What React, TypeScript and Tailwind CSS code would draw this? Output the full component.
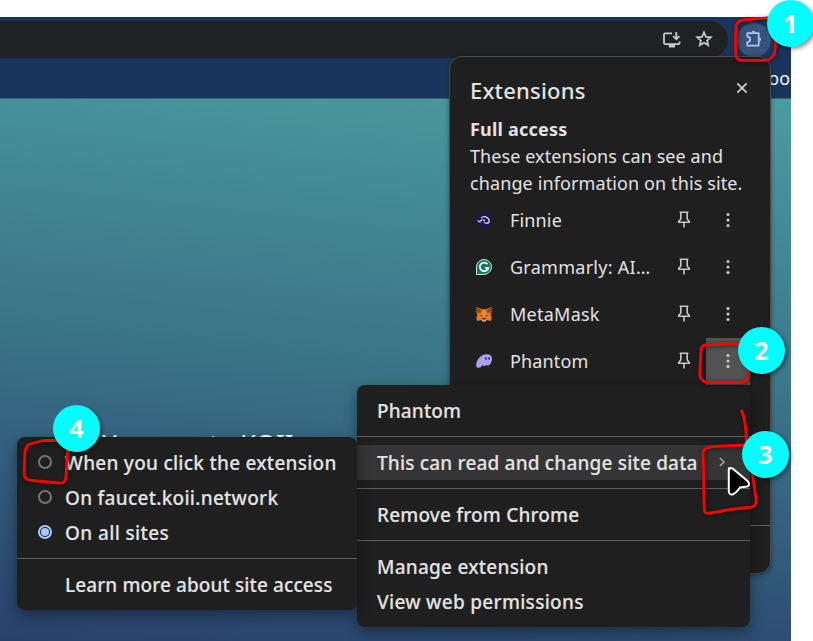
import type { ReactNode } from "react";

function InstallIcon() {
  return (
    <svg width="18" height="16" viewBox="0 0 18 16" fill="none" stroke="#c7c9cc" strokeWidth="1.8">
      <path d="M9 1.4H2.2Q1 1.4 1 2.6V11Q1 12.2 2.2 12.2H15.4Q16.6 12.2 16.6 11V9.4M13.3 0V7M10.2 4.2L13.3 7.3L16.4 4.2" />
      <path d="M5.8 14.2H12" strokeWidth="2.6" />
    </svg>
  );
}

function StarIcon() {
  return (
    <svg width="18" height="18" viewBox="0 0 18 18" fill="none" stroke="#c7c9cc" strokeWidth="1.7" className="-mt-[2px]">
      <path d="M9 2.3L10.9 6.9L15.8 7.3L12.1 10.5L13.2 15.3L9 12.8L4.8 15.3L5.9 10.5L2.2 7.3L7.1 6.9Z" />
    </svg>
  );
}

function PuzzleIcon() {
  return (
    <svg width="18" height="18" viewBox="0 0 18 18" className="-mt-[2px]">
      <path
        d="M2.3 3.2H13.7V15.6H2.3V12.2C4.2 12 5.2 10.9 5.2 9.4S4.2 6.8 2.3 6.6Z"
        fill="none"
        stroke="#a8c7fa"
        strokeWidth="1.7"
        strokeLinejoin="round"
      />
      <path d="M6.7 2.6A1.8 1.8 0 0 1 10.3 2.6ZM14.3 7.3A2.2 2.2 0 0 1 14.3 11.6Z" fill="#a8c7fa" />
    </svg>
  );
}

function PinIcon() {
  return (
    <svg width="14" height="17" viewBox="0 0 14 17" fill="none" stroke="#c7c7c7" strokeWidth="1.6">
      <path d="M2.6 1.2H11.4M3.8 1.2V8L1.7 10.5V11.3H12.3V10.5L10.2 8V1.2M7 11.2V16.5" />
    </svg>
  );
}

function DotsIcon() {
  return (
    <svg width="4" height="16" viewBox="0 0 4 16" fill="#d0d0d0">
      <circle cx="2" cy="2.4" r="1.5" />
      <circle cx="2" cy="8" r="1.5" />
      <circle cx="2" cy="13.6" r="1.5" />
    </svg>
  );
}

function FinnieIcon() {
  return (
    <svg width="16" height="16" viewBox="0 0 16 16" fill="none">
      <circle cx="8" cy="8" r="8" fill="#1d1552" />
      <path d="M5.2 6.1Q8 3.4 11 5.6T12.8 10.6Q10.5 11.8 8 10.5" stroke="#e5e2f3" strokeWidth="1.3" />
      <path d="M1.7 8.2Q2.5 10 4 9.2T6.3 7.1M4 9.4V10.8" stroke="#d5d1e8" strokeWidth="1.1" />
      <circle cx="8" cy="8.3" r="1" fill="#d5d1e8" />
    </svg>
  );
}

function GrammarlyIcon() {
  return (
    <svg width="16" height="16" viewBox="0 0 16 16" fill="none">
      <path d="M.5 8A7.5 7.5 0 1 1 8 15.5H.5Z" fill="#0f7864" stroke="#cce0dc" />
      <path d="M11.4 5.1A4.3 4.3 0 1 0 12.3 9H8.9" stroke="#fff" strokeWidth="1.8" />
      <path d="M12.2 8.2V11" stroke="#fff" strokeWidth="1.2" />
    </svg>
  );
}

function MetaMaskIcon() {
  return (
    <svg width="16" height="16" viewBox="0 0 16 16">
      <path d="M.5 1L6 3.2H10L15.5 1L15.8 6L14.7 8.6L15.8 12.5L14.5 15L11 14L9.7 15.2H6.3L5 14L1.5 15L.2 12.5L1.3 8.6L.2 6Z" fill="#e97920" />
      <path d="M.5 1L5.8 4.8L5 6.5L.9 7L.2 5.5ZM15.5 1L10.2 4.8L11 6.5L15.1 7L15.8 5.5Z" fill="#8b451f" />
      <path d="M6.2 4H9.8L9.3 10L8 12L6.7 10Z" fill="#f28b2d" />
      <path d="M3.8 8.8L6.2 9.6L5.7 10.6ZM12.2 8.8L9.8 9.6L10.3 10.6Z" fill="#43352c" />
      <path d="M6 12.4H10L10.2 14L9.5 15.4H6.5L5.8 14Z" fill="#c1aea0" />
      <path d="M6.5 12.1H9.5L9.7 13.5H6.3Z" fill="#2f2825" />
    </svg>
  );
}

function PhantomIcon() {
  return (
    <svg width="16" height="16" viewBox="0 0 16 16">
      <path d="M.1 12.5C.3 6.2 5.2 1.3 11 1.3C15 1.3 16.6 4 15.8 7.5C15.1 10.8 13 12.8 11.4 12.5C10.6 12.4 10.5 11.8 10.5 11.4C9.8 12.6 8.8 13.3 7.9 13C7.1 12.8 7 12.2 7.2 11.5C5.9 13.4 4.1 15 2.1 14.7C.8 14.5.1 13.7.1 12.5Z" fill="#ab9ff2" />
      <ellipse cx="10" cy="5.5" rx=".9" ry="1.3" fill="#25203c" />
      <ellipse cx="13.1" cy="5.5" rx=".9" ry="1.3" fill="#25203c" />
    </svg>
  );
}

interface Extension {
  name: string;
  icon: ReactNode;
  spacing: string;
  active?: boolean;
}

const extensions: Extension[] = [
  { name: "Finnie", icon: <FinnieIcon />, spacing: "tracking-[0.15px]" },
  { name: "Grammarly: AI…", icon: <GrammarlyIcon />, spacing: "tracking-[0.27px]" },
  { name: "MetaMask", icon: <MetaMaskIcon />, spacing: "tracking-[0.25px]" },
  { name: "Phantom", icon: <PhantomIcon />, spacing: "tracking-[0.14px]", active: true },
];

function ExtensionRow({ name, icon, spacing, active }: Extension) {
  return (
    <div className="flex h-[47px] items-center pl-[6px]">
      <span className="pb-[2px]">{icon}</span>
      <span className={`ml-[18px] w-[159px] whitespace-nowrap text-[18px] ${spacing}`}>{name}</span>
      <span className="flex w-[30px] justify-center pb-[2px]">
        <PinIcon />
      </span>
      <span className={`ml-[7px] flex h-full w-[44px] items-center justify-center pb-px ${active ? "bg-[#535353]" : ""}`}>
        <DotsIcon />
      </span>
    </div>
  );
}

function Separator() {
  return <div className="my-2 h-px bg-[#606060]" />;
}

function MenuItem({ children, spacing }: { children: ReactNode; spacing: string }) {
  return <div className={`flex h-[35px] items-center whitespace-nowrap pl-5 pt-[2px] ${spacing}`}>{children}</div>;
}

function Radio({ checked = false }: { checked?: boolean }) {
  return (
    <span className={`-mt-[3px] ml-[1px] mr-[13px] flex size-[14px] items-center justify-center rounded-full border-2 ${checked ? "border-[#a8c7fa]" : "border-[#757575]"}`}>
      {checked && <span className="size-2 rounded-full bg-[#a8c7fa]" />}
    </span>
  );
}

function Badge({ children, position }: { children: string; position: string }) {
  return (
    <div className={`absolute flex size-[47px] items-center justify-center rounded-full bg-[#00ffff] font-['Open_Sans',sans-serif] text-[25px] font-bold text-white shadow-[2px_2px_4px_rgba(0,0,0,0.45)] ${position}`}>
      {children}
    </div>
  );
}

export default function App() {
  return (
    <div className="relative h-[641px] w-[813px] overflow-hidden bg-white pt-[17px] font-['Noto_Sans',sans-serif] text-[#e3e3e3]">
      <div className="flex h-[624px] w-[791px] flex-col bg-[#1a355b]">
        <div className="flex h-[41px] items-center pt-1">
          <div className="flex h-[37px] w-[728px] items-center justify-end gap-[14px] rounded-r-full bg-[#202124] pr-[15px]">
            <InstallIcon />
            <StarIcon />
          </div>
          <div className="ml-[9px] flex size-[34px] items-center justify-center rounded-full bg-[#38527b]">
            <PuzzleIcon />
          </div>
        </div>
        <div className="flex h-[41px] items-center justify-end border-b border-[#435b7d] pr-px pt-px font-['Open_Sans',sans-serif] text-[18px] font-medium text-white">
          oo
        </div>
        <div className="flex-1 bg-[linear-gradient(186deg,#4a9c9f_0%,#3a7388_50%,#29406b_100%)] pl-[102px] pt-[326px] text-white">
          <div className="flex text-[26px] leading-[36px]">
            <span className="w-[107px]">Y</span>
            <span className="w-[31px]">t</span>
            <span>KOII</span>
          </div>
        </div>
      </div>

      <div className="absolute left-[449px] top-[56px] flex h-[518px] w-[322px] flex-col rounded-[13px] border border-[#4b4b4b] bg-[#1f1f1f] pl-5 text-[18px] leading-[27px] shadow-[0_2px_5px_rgba(0,0,0,0.4)]">
        <div className="flex h-[59px] items-center justify-between pr-[22px] pt-[7px]">
          <h1 className="text-[22px] font-medium tracking-[0.2px]">Extensions</h1>
          <svg width="12" height="12" viewBox="0 0 12 12" className="-mt-1" stroke="#d0d0d0" strokeWidth="1.7">
            <path d="M1.3 1.3L10.7 10.7M10.7 1.3L1.3 10.7" />
          </svg>
        </div>
        <h2 className="font-bold tracking-[0.2px]">Full access</h2>
        <p className="whitespace-nowrap tracking-[0.08px]">These extensions can see and</p>
        <p className="whitespace-nowrap tracking-[0.11px]">change information on this site.</p>
        {extensions.map((extension) => (
          <ExtensionRow key={extension.name} {...extension} />
        ))}
        <div className="-ml-5 mt-[140px] h-px bg-[#606060]" />
      </div>

      <div className="absolute left-[357px] top-[385px] w-[393px] rounded-lg bg-[#1f1f1f] py-2 text-[19px] font-medium shadow-[0_5px_14px_rgba(0,0,0,0.4)] [-webkit-text-stroke:0.15px_#e3e3e3]">
        <MenuItem spacing="tracking-[0.15px]">Phantom</MenuItem>
        <Separator />
        <div className="flex h-[35px] items-center justify-between bg-[#353535] pl-5 pr-[25px]">
          <span className="whitespace-nowrap pt-[2px] tracking-[0.18px]">This can read and change site data</span>
          <svg width="6" height="10" viewBox="0 0 6 10" fill="none" stroke="#aaa" strokeWidth="1.5" className="-mt-px">
            <path d="M1 1L5 5L1 9" />
          </svg>
        </div>
        <Separator />
        <MenuItem spacing="tracking-[0.18px]">Remove from Chrome</MenuItem>
        <Separator />
        <MenuItem spacing="tracking-[0.25px]">Manage extension</MenuItem>
        <MenuItem spacing="tracking-[0.3px]">View web permissions</MenuItem>
      </div>

      <div className="absolute left-[17px] top-[437px] w-[340px] rounded-lg bg-[#1f1f1f] py-2 text-[19px] font-medium shadow-[0_5px_14px_rgba(0,0,0,0.4)] [-webkit-text-stroke:0.15px_#e3e3e3]">
        <MenuItem spacing="tracking-[0.26px]"><Radio />When you click the extension</MenuItem>
        <MenuItem spacing="tracking-[0.27px]"><Radio />On faucet.koii.network</MenuItem>
        <MenuItem spacing="tracking-[0.38px]"><Radio checked />On all sites</MenuItem>
        <Separator />
        <MenuItem spacing="tracking-[0.1px]"><span className="w-7" />Learn more about site access</MenuItem>
      </div>

      <svg className="absolute left-0 top-0" width="813" height="641" viewBox="0 0 813 641" fill="none">
        <g stroke="#fd0000" strokeWidth="2.8" strokeLinecap="round" strokeLinejoin="round" className="drop-shadow-[1px_1px_2px_rgba(0,0,0,0.5)]">
          <path d="M770 17.7L744 20Q738 20 736.5 25Q735 35 735.7 53Q736 60 741 60.3H763Q769 61 773 56Q776 53 775.3 37" />
          <path d="M742 344H727L705 345Q701 345.5 701 351L699.7 373Q699 378 704 381.5Q706 383 712 382.5H740Q748 383 748.7 371" />
          <path d="M741.7 411Q745.7 419 746.5 443M745 445L713 446.5Q703 447 703 453L703.7 473V497L704.5 511Q705 514 711 513L730 509.5L748 507.5Q757 508 756 499L752.3 473" />
          <path d="M59 440.5H43Q29 444 28 445Q25 448 24.7 455L24.2 474Q24.5 480.5 32 480.5L59 483Q66 484 66 476L67.7 450" />
        </g>
        <path d="M730 468.5Q728.8 467 728.8 470V491Q729 495.5 733 494.2Q736 493 740 487.5L747 486.5Q751 485 747.5 481L735 470.5Q731.5 467 730 468.5Z" fill="#000" stroke="#fff" strokeWidth="2" />
      </svg>
      <Badge position="left-[767px] top-0">1</Badge>
      <Badge position="left-[738px] top-[327px]">2</Badge>
      <Badge position="left-[742px] top-[431px]">3</Badge>
      <Badge position="left-[53px] top-[405px]">4</Badge>
    </div>
  );
}
